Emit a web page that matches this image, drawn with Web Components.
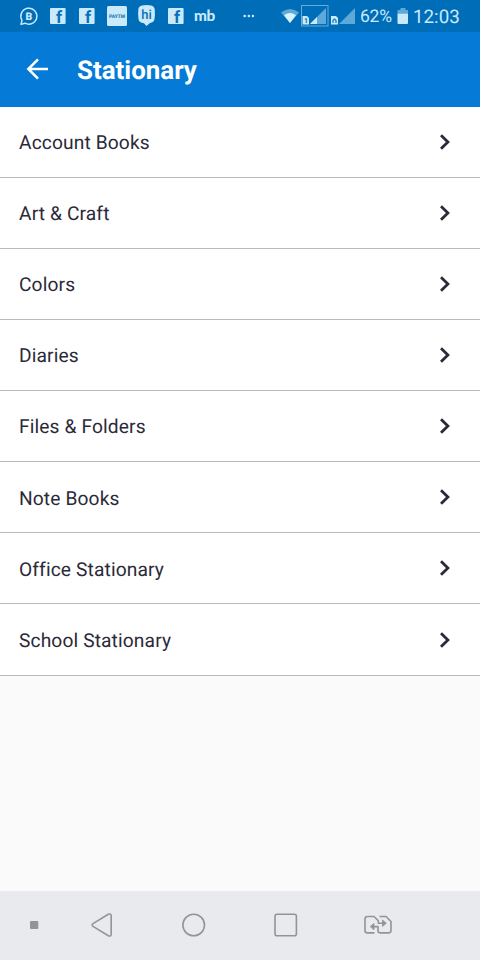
<!DOCTYPE html>
<html lang="en">
<head>
  <meta charset="utf-8">
  <title>Stationary</title>
  <style>
    body {
      margin: 0;
      font-family: Roboto, "Liberation Sans", sans-serif;
      font-variant-ligatures: none;
      text-rendering: geometricPrecision;
      background: #fafafa;
    }
  </style>
</head>
<body>
  <phone-screen>
    <status-bar slot="top"></status-bar>
    <app-header slot="top">Stationary</app-header>
    <category-item>Account Books</category-item>
    <category-item>Art &amp; Craft</category-item>
    <category-item>Colors</category-item>
    <category-item>Diaries</category-item>
    <category-item>Files &amp; Folders</category-item>
    <category-item>Note Books</category-item>
    <category-item>Office Stationary</category-item>
    <category-item>School Stationary</category-item>
    <nav-bar slot="bottom"></nav-bar>
  </phone-screen>

  <script>
    class PhoneScreen extends HTMLElement {
      constructor() {
        super();
        this.attachShadow({ mode: "open" });
      }

      connectedCallback() {
        this.shadowRoot.innerHTML = `
          <style>
            :host {
              display: flex;
              flex-direction: column;
              width: 480px;
              height: 960px;
              overflow: hidden;
              background: #fafafa;
            }
            main {
              flex: 1;
              min-height: 0;
            }
          </style>
          <slot name="top"></slot>
          <main><slot></slot></main>
          <slot name="bottom"></slot>
        `;
      }
    }

    // small square tile with the letter f
    class FacebookIcon extends HTMLElement {
      constructor() {
        super();
        this.attachShadow({ mode: "open" });
      }

      connectedCallback() {
        this.shadowRoot.innerHTML = `
          <style>
            :host { display: block; width: 16px; height: 16px; }
            svg { display: block; overflow: visible; }
          </style>
          <svg width="16" height="16" viewBox="0 0 16 16">
            <rect width="15.6" height="16" rx="1" fill="#c8eafb"/>
            <text x="6" y="15.2" font-family="Roboto, sans-serif" font-size="17" font-weight="700" fill="#0870bb">f</text>
          </svg>
        `;
      }
    }

    class StatusBar extends HTMLElement {
      constructor() {
        super();
        this.attachShadow({ mode: "open" });
      }

      connectedCallback() {
        this.shadowRoot.innerHTML = `
          <style>
            :host {
              display: flex;
              flex: none;
              align-items: center;
              box-sizing: border-box;
              height: 32px;
              padding-left: 19px;
              background: #006db8;
              color: #c8eafb;
            }
            svg, .mb { display: block; flex: none; }
            svg { overflow: visible; }
            facebook-icon { flex: none; }
            .mb { width: 22px; font: 900 15.3px/30px Lato, sans-serif; letter-spacing: -0.3px; }
            .battery { width: 32px; padding-top: 3px; font-size: 17.5px; line-height: 29px; letter-spacing: -0.2px; }
            .clock { padding-top: 2px; font-size: 18.8px; line-height: 30px; }
          </style>
          <svg width="20" height="20" viewBox="0 0 20 20">
            <path d="M2 18.4 3 14.3A8 8 0 1 1 6 17.2Z" fill="none" stroke="#c8eafb" stroke-width="1.5" stroke-linejoin="round"/>
            <text x="6.6" y="13.8" font-family="Roboto, sans-serif" font-size="10.5" font-weight="900" fill="#c8eafb">B</text>
          </svg>
          <facebook-icon style="margin-left:11px"></facebook-icon>
          <facebook-icon style="margin-left:13.4px"></facebook-icon>
          <svg style="margin-left:11.6px" width="20" height="20" viewBox="0 0 20 20">
            <rect width="20" height="20" rx="1.5" fill="#c8eafb"/>
            <text x="2" y="11.8" font-family="Roboto, sans-serif" font-size="5" font-weight="900" textLength="16" lengthAdjust="spacingAndGlyphs" fill="#2878ac">PAYTM</text>
          </svg>
          <svg style="margin-left:11px" width="18" height="22" viewBox="0 0 18 22">
            <path d="M4 .5Q9-.3 13 .5Q16.5 1 16.8 5Q17.2 10 16.5 14Q16 17.5 12 18L8.5 21 6 18.2Q1 18 .5 14Q-.2 9 .4 4Q.8 1 4 .5Z" fill="#c8eafb"/>
            <text x="3.2" y="14" font-family="Roboto, sans-serif" font-size="13" font-weight="500" fill="#0870bb">hi</text>
          </svg>
          <facebook-icon style="margin-left:12px"></facebook-icon>
          <span class="mb" style="margin-left:10px">mb</span>
          <svg style="margin-left:27px" width="12" height="4" viewBox="0 0 12 4" fill="#c8eafb">
            <circle cx="1.7" cy="2" r="1.3"/><circle cx="5.8" cy="2" r="1.3"/><circle cx="9.9" cy="2" r="1.3"/>
          </svg>
          <svg style="margin-left:26px" width="18" height="14" viewBox="0 0 18 14">
            <path d="M0 3.5Q9-3.5 18 3.5L9 14Z" fill="#5fa9d9"/>
            <path d="M3 6.2Q9 1.8 15 6.2L9 14Z" fill="#d7f1fd"/>
          </svg>
          <svg style="margin-left:2px" width="28" height="22" viewBox="0 0 28 22">
            <rect x=".5" y=".5" width="26.5" height="20.5" fill="none" stroke="#67acd8"/>
            <path d="M9 19 25 3V19Z" fill="#5fa9d9"/>
            <path d="M9 19 16 12V19Z" fill="#c8eafb"/>
            <path d="M1.5 11H6L8 13V19.5H1.5Z" fill="#c8eafb"/>
            <text x="3" y="18" font-family="Roboto, sans-serif" font-size="7" font-weight="700" fill="#0870bb">1</text>
          </svg>
          <svg style="margin-left:2px" width="25" height="22" viewBox="0 0 25 22">
            <path d="M8 19 24 3V19Z" fill="#5fa9d9"/>
            <path d="M0 11H5L7 13V19.5H0Z" fill="#c8eafb"/>
            <path d="M2 18V15.4L3.5 14 5 15.4V18" fill="none" stroke="#0870bb" stroke-width="1.2"/>
          </svg>
          <span class="battery" style="margin-left:4px">62%</span>
          <svg style="margin-left:5px" width="12" height="16" viewBox="0 0 12 16">
            <path d="M3.5 0H8.5V2H11V5.5H.5V2H3.5Z" fill="#5fa9d9"/>
            <path d="M.5 5.5H11V15Q11 16 10 16H1.5Q.5 16 .5 15Z" fill="#c8eafb"/>
          </svg>
          <span class="clock" style="margin-left:4px">12:03</span>
        `;
      }
    }

    class AppHeader extends HTMLElement {
      constructor() {
        super();
        this.attachShadow({ mode: "open" });
      }

      connectedCallback() {
        this.shadowRoot.innerHTML = `
          <style>
            :host {
              display: flex;
              flex: none;
              align-items: center;
              gap: 28px;
              box-sizing: border-box;
              height: 74.6px;
              padding-left: 26px;
              background: #057bd7;
              color: #fff;
            }
            h1 {
              margin: 4px 0 0;
              font-size: 25.9px;
              font-weight: 700;
              line-height: 32px;
            }
          </style>
          <svg width="23" height="24" viewBox="0 0 23 24" fill="none" stroke="#fff" stroke-width="2.5">
            <path d="M22 12H2.5M12 2.3 2.3 12 12 21.7"/>
          </svg>
          <h1><slot></slot></h1>
        `;
      }
    }

    class CategoryItem extends HTMLElement {
      constructor() {
        super();
        this.attachShadow({ mode: "open" });
      }

      connectedCallback() {
        this.shadowRoot.innerHTML = `
          <style>
            :host {
              display: flex;
              align-items: center;
              justify-content: space-between;
              box-sizing: border-box;
              height: 71.14px;
              padding: 0 29px 0 19px;
              border-bottom: 1px solid #b4bdc1;
              background: #fff;
              color: #2b2a38;
              font-size: 19.2px;
              letter-spacing: 0.12px;
            }
            span { padding-top: 1.6px; }
          </style>
          <span><slot></slot></span>
          <svg width="12" height="18" viewBox="0 0 12 18" fill="none" stroke="#2b2a38" stroke-width="2.8">
            <path d="M2 2.3 8.9 9 2 15.7"/>
          </svg>
        `;
      }
    }

    class NavBar extends HTMLElement {
      constructor() {
        super();
        this.attachShadow({ mode: "open" });
      }

      connectedCallback() {
        this.shadowRoot.innerHTML = `
          <style>
            :host {
              display: flex;
              flex: none;
              align-items: center;
              box-sizing: border-box;
              height: 69px;
              padding: 0 0 0.4px 30px;
              background: #e9eaee;
            }
            svg {
              flex: none;
              fill: none;
              stroke: #939498;
              stroke-width: 1.6;
              stroke-linejoin: round;
            }
          </style>
          <svg width="9" height="8" viewBox="0 0 9 8">
            <rect x="0" y="0" width="8.3" height="8" rx="1" style="fill:#939498;stroke:none"/>
          </svg>
          <svg style="margin-left:52px" width="22" height="24" viewBox="0 0 22 24">
            <path d="M2 10.6 17.3 1.3Q20.2.1 20.2 3V21Q20.2 23.9 17.3 22.7L2 13.4Q.3 12 2 10.6Z"/>
          </svg>
          <svg style="margin-left:69px" width="24" height="24" viewBox="0 0 24 24">
            <circle cx="11.7" cy="12" r="10.8"/>
          </svg>
          <svg style="margin-left:68px" width="24" height="24" viewBox="0 0 24 24">
            <rect x="1" y="1.2" width="21.4" height="21.6" rx="2"/>
          </svg>
          <svg style="margin-left:66px" width="28" height="20" viewBox="0 0 28 20">
            <path d="M10.5 17.9H3.5Q1 17.9 1 15.4V4Q1 1.5 3.5 1.5H10L14.3 5.8V8.2H19"/>
            <path d="M15.5 1.5H22L27 6.5V15.4Q27 17.9 24.5 17.9H16.5Q14 17.9 14 15.4V11.6H9"/>
            <path d="M18.5 5V11.4L22.3 8.2ZM10 8.4V14.8L6.2 11.6Z" style="fill:#939498;stroke-width:.8"/>
          </svg>
        `;
      }
    }

    customElements.define("phone-screen", PhoneScreen);
    customElements.define("facebook-icon", FacebookIcon);
    customElements.define("status-bar", StatusBar);
    customElements.define("app-header", AppHeader);
    customElements.define("category-item", CategoryItem);
    customElements.define("nav-bar", NavBar);
  </script>
</body>
</html>
